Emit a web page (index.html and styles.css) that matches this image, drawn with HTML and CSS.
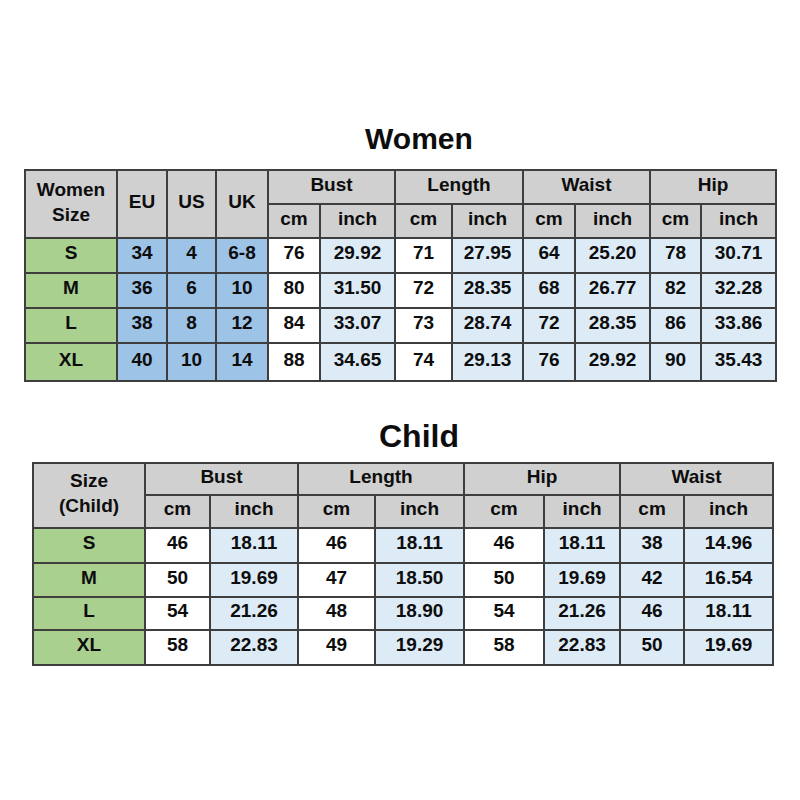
FILE: index.html
```html
<!DOCTYPE html>
<html>
<head>
<meta charset="utf-8">
<link rel="stylesheet" href="styles.css">
</head>
<body>
<div class="page">
  <h1 class="title title-women">Women</h1>
  <table class="chart chart-women">
    <colgroup>
      <col class="c92"><col class="c50"><col class="c49"><col class="c52">
      <col class="c52"><col class="c75"><col class="c57"><col class="c71">
      <col class="c52"><col class="c75"><col class="c51"><col class="c75">
    </colgroup>
    <tr class="h1">
      <th rowspan="2" class="two-line">Women<br>Size</th>
      <th rowspan="2">EU</th>
      <th rowspan="2">US</th>
      <th rowspan="2">UK</th>
      <th colspan="2">Bust</th>
      <th colspan="2">Length</th>
      <th colspan="2">Waist</th>
      <th colspan="2">Hip</th>
    </tr>
    <tr class="h2">
      <th>cm</th><th>inch</th><th>cm</th><th>inch</th><th>cm</th><th>inch</th><th>cm</th><th>inch</th>
    </tr>
    <tr class="r">
      <td class="g">S</td><td class="b">34</td><td class="b">4</td><td class="b">6-8</td>
      <td class="w">76</td><td class="lb">29.92</td><td class="w">71</td><td class="lb">27.95</td>
      <td class="lb">64</td><td class="lb">25.20</td><td class="lb">78</td><td class="lb">30.71</td>
    </tr>
    <tr class="r">
      <td class="g">M</td><td class="b">36</td><td class="b">6</td><td class="b">10</td>
      <td class="w">80</td><td class="lb">31.50</td><td class="w">72</td><td class="lb">28.35</td>
      <td class="lb">68</td><td class="lb">26.77</td><td class="lb">82</td><td class="lb">32.28</td>
    </tr>
    <tr class="r">
      <td class="g">L</td><td class="b">38</td><td class="b">8</td><td class="b">12</td>
      <td class="w">84</td><td class="lb">33.07</td><td class="w">73</td><td class="lb">28.74</td>
      <td class="lb">72</td><td class="lb">28.35</td><td class="lb">86</td><td class="lb">33.86</td>
    </tr>
    <tr class="r r-last">
      <td class="g">XL</td><td class="b">40</td><td class="b">10</td><td class="b">14</td>
      <td class="w">88</td><td class="lb">34.65</td><td class="w">74</td><td class="lb">29.13</td>
      <td class="lb">76</td><td class="lb">29.92</td><td class="lb">90</td><td class="lb">35.43</td>
    </tr>
  </table>

  <h1 class="title title-child">Child</h1>
  <table class="chart chart-child">
    <colgroup>
      <col class="c112"><col class="c65"><col class="c88"><col class="c77"><col class="c89">
      <col class="c80"><col class="c76"><col class="c64"><col class="c89">
    </colgroup>
    <tr class="k1">
      <th rowspan="2" class="two-line">Size<br>(Child)</th>
      <th colspan="2">Bust</th>
      <th colspan="2">Length</th>
      <th colspan="2">Hip</th>
      <th colspan="2">Waist</th>
    </tr>
    <tr class="k2">
      <th>cm</th><th>inch</th><th>cm</th><th>inch</th><th>cm</th><th>inch</th><th>cm</th><th>inch</th>
    </tr>
    <tr class="k3">
      <td class="g">S</td><td class="w">46</td><td class="lb">18.11</td><td class="w">46</td><td class="lb">18.11</td>
      <td class="w">46</td><td class="lb">18.11</td><td class="lb">38</td><td class="lb">14.96</td>
    </tr>
    <tr class="k4">
      <td class="g">M</td><td class="w">50</td><td class="lb">19.69</td><td class="w">47</td><td class="lb">18.50</td>
      <td class="w">50</td><td class="lb">19.69</td><td class="lb">42</td><td class="lb">16.54</td>
    </tr>
    <tr class="k5">
      <td class="g">L</td><td class="w">54</td><td class="lb">21.26</td><td class="w">48</td><td class="lb">18.90</td>
      <td class="w">54</td><td class="lb">21.26</td><td class="lb">46</td><td class="lb">18.11</td>
    </tr>
    <tr class="k6">
      <td class="g">XL</td><td class="w">58</td><td class="lb">22.83</td><td class="w">49</td><td class="lb">19.29</td>
      <td class="w">58</td><td class="lb">22.83</td><td class="lb">50</td><td class="lb">19.69</td>
    </tr>
  </table>
</div>
</body>
</html>
```

FILE: styles.css
```css
html, body {
  margin: 0;
  padding: 0;
  background: #ffffff;
}

.page {
  width: 800px;
  height: 800px;
  padding-top: 121px;
  box-sizing: border-box;
  font-family: "Liberation Sans", Arial, sans-serif;
  color: #0d0d0d;
}

.title {
  margin: 0;
  padding-left: 38px;
  text-align: center;
  font-weight: bold;
  color: #0d0d0d;
}

.title-women {
  font-size: 30px;
  line-height: 36px;
  margin-bottom: 12px;
}

.title-child {
  font-size: 32px;
  line-height: 38px;
  margin-top: 35px;
  margin-bottom: 7px;
}

.chart {
  border-collapse: collapse;
  table-layout: fixed;
  font-size: 19px;
  font-weight: bold;
}

.chart th,
.chart td {
  border: 2px solid #3e3e3e;
  padding: 0 0 5px 0;
  text-align: center;
  vertical-align: middle;
  white-space: nowrap;
}

.chart th {
  background: #d0d0d0;
  font-weight: bold;
}

.two-line {
  line-height: 25px;
}

.chart-women {
  width: 751px;
  margin-left: 24px;
}

.chart-child {
  width: 740px;
  margin-left: 32px;
}

.c92 { width: 92px; }
.c50 { width: 50px; }
.c49 { width: 49px; }
.c52 { width: 52px; }
.c75 { width: 75px; }
.c57 { width: 57px; }
.c71 { width: 71px; }
.c51 { width: 51px; }
.c112 { width: 112px; }
.c65 { width: 65px; }
.c88 { width: 88px; }
.c77 { width: 77px; }
.c89 { width: 89px; }
.c80 { width: 80px; }
.c76 { width: 76px; }
.c64 { width: 64px; }

.h1, .h2 { height: 34px; }
.r { height: 35px; }
.r-last { height: 38px; }

.k1 { height: 32px; }
.k2 { height: 33px; }
.k3 { height: 35px; }
.k4 { height: 34px; }
.k5 { height: 33px; }
.k6 { height: 35px; }

.g { background: #a9d08e; }
.b { background: #9dc3e6; }
.lb { background: #ddebf7; }
.w { background: #ffffff; }
```
